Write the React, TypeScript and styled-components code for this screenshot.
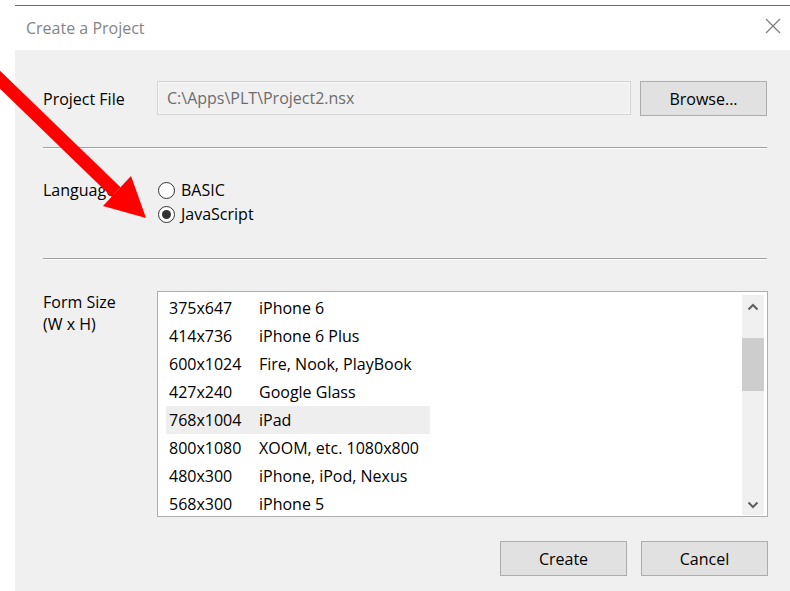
import React from 'react'
import styled, { createGlobalStyle } from 'styled-components'

const GlobalStyle = createGlobalStyle`
	html, body {
		margin: 0;
		padding: 0;
		background: #ffffff;
	}
	body {
		font-family: 'Segoe UI', 'Open Sans', 'Noto Sans', sans-serif;
		font-size: 15px;
		color: #000000;
	}
`

interface FormSize {
	size: string
	name: string
}

const sizes: FormSize[] = [
	{ size: '375x647', name: 'iPhone 6' },
	{ size: '414x736', name: 'iPhone 6 Plus' },
	{ size: '600x1024', name: 'Fire, Nook, PlayBook' },
	{ size: '427x240', name: 'Google Glass' },
	{ size: '768x1004', name: 'iPad' },
	{ size: '800x1080', name: 'XOOM, etc. 1080x800' },
	{ size: '480x300', name: 'iPhone, iPod, Nexus' },
	{ size: '568x300', name: 'iPhone 5' },
]

const selectedIndex = 4

export default function App() {
	return (
		<Page>
			<GlobalStyle />
			<Dialog>
				<TitleBar>
					<Title>Create a Project</Title>
					<CloseIcon viewBox="0 0 16 16" width="16" height="16">
						<path d="M1 1 L15 15 M15 1 L1 15" stroke="#7a7a7a" strokeWidth="1.2" />
					</CloseIcon>
				</TitleBar>
				<Body>
					<FieldRow>
						<Label>Project File</Label>
						<PathInput>C:\Apps\PLT\Project2.nsx</PathInput>
						<Button>Browse...</Button>
					</FieldRow>
					<Separator />
					<LanguageRow>
						<Label>Language</Label>
						<RadioGroup>
							<RadioOption>
								<RadioCircle $checked={false} />
								BASIC
							</RadioOption>
							<RadioOption>
								<RadioCircle $checked />
								JavaScript
							</RadioOption>
						</RadioGroup>
					</LanguageRow>
					<Separator />
					<SizeRow>
						<Label>
							Form Size
							<br />
							(W x H)
						</Label>
						<ListBox>
							<Rows>
								{sizes.map((s, i) => (
									<ListRow key={s.size} $selected={i === selectedIndex}>
										<SizeCell>{s.size}</SizeCell>
										<span>{s.name}</span>
									</ListRow>
								))}
							</Rows>
							<ScrollBar>
								<ScrollArrow viewBox="0 0 12 8" width="12" height="8">
									<path d="M1.5 6.5 L6 2 L10.5 6.5" stroke="#606060" strokeWidth="2" fill="none" />
								</ScrollArrow>
								<Track>
									<Thumb />
								</Track>
								<ScrollArrow viewBox="0 0 12 8" width="12" height="8">
									<path d="M1.5 1.5 L6 6 L10.5 1.5" stroke="#606060" strokeWidth="2" fill="none" />
								</ScrollArrow>
							</ScrollBar>
						</ListBox>
					</SizeRow>
					<Footer>
						<Button>Create</Button>
						<Button>Cancel</Button>
					</Footer>
				</Body>
			</Dialog>
			<Arrow viewBox="0 0 160 230" width="160" height="230">
				<line x1="-8" y1="72" x2="116" y2="192" stroke="#ff0000" strokeWidth="13" />
				<polygon points="103,206 131,176 146,218" fill="#ff0000" />
			</Arrow>
		</Page>
	)
}

const Page = styled.div`
	position: relative;
	width: 790px;
	height: 591px;
	overflow: hidden;
	background: #ffffff;
`

const Dialog = styled.div`
	margin: 5px 0 0 15px;
	width: 775px;
	height: 586px;
	border-top: 1px solid #6a6a6a;
	display: flex;
	flex-direction: column;
`

const TitleBar = styled.div`
	height: 44px;
	flex: none;
	display: flex;
	align-items: center;
	justify-content: space-between;
	padding: 0 10px 0 11px;
	background: #ffffff;
`

const Title = styled.span`
	font-size: 16px;
	color: #858585;
	margin-top: -1px;
`

const CloseIcon = styled.svg`
	display: block;
	margin-top: -4px;
	margin-right: -1px;
`

const Body = styled.div`
	flex: 1;
	background: #f0f0f0;
	padding: 31px 22px 0 28px;
	display: flex;
	flex-direction: column;
`

const Label = styled.div`
	width: 114px;
	flex: none;
	font-size: 16px;
	line-height: 22px;
	color: #000000;
`

const FieldRow = styled.div`
	display: flex;
	align-items: center;
	gap: 9px;
	height: 35px;
	& > ${Label} {
		margin-right: -9px;
	}
`

const PathInput = styled.div`
	width: 474px;
	height: 34px;
	box-sizing: border-box;
	border: 1px solid #d4d4d4;
	box-shadow: inset 0 0 0 1px #f7f7f7;
	padding: 0 9px;
	display: flex;
	align-items: center;
	font-size: 16px;
	color: #6d6d6d;
	background: #f0f0f0;
	margin-top: -1px;
`

const Button = styled.div`
	width: 127px;
	height: 35px;
	box-sizing: border-box;
	border: 1px solid #adadad;
	background: #e1e1e1;
	display: flex;
	align-items: center;
	justify-content: center;
	font-size: 16px;
	color: #000000;
`

const Separator = styled.div`
	height: 1px;
	border-top: 1px solid #a0a0a0;
	background: #ffffff;
	margin: 31px 0 0;
	width: 724px;
`

const LanguageRow = styled.div`
	display: flex;
	align-items: flex-start;
	margin-top: 30px;
	height: 48px;
`

const RadioGroup = styled.div`
	display: flex;
	flex-direction: column;
	margin-top: -1px;
`

const RadioOption = styled.label`
	display: flex;
	align-items: center;
	gap: 6px;
	height: 24px;
	font-size: 16px;
	color: #000000;
`

const RadioCircle = styled.span<{ $checked: boolean }>`
	width: 17px;
	height: 17px;
	box-sizing: border-box;
	border-radius: 50%;
	border: 1px solid #333333;
	background: #ffffff;
	position: relative;
	margin-left: 1px;
	&::after {
		content: '';
		display: ${(p) => (p.$checked ? 'block' : 'none')};
		position: absolute;
		left: 3px;
		top: 3px;
		width: 9px;
		height: 9px;
		border-radius: 50%;
		background: #333333;
	}
`

const SizeRow = styled.div`
	display: flex;
	align-items: flex-start;
	margin-top: 31px;
	line-height: 22px;
`

const ListBox = styled.div`
	width: 612px;
	height: 226px;
	box-sizing: border-box;
	border: 1px solid #aeaeae;
	background: #ffffff;
	display: flex;
	justify-content: space-between;
	padding: 2px 3px 2px 8px;
	overflow: hidden;
`

const Rows = styled.div`
	display: flex;
	flex-direction: column;
	flex: none;
`

const ListRow = styled.div<{ $selected: boolean }>`
	width: 264px;
	height: 28px;
	flex: none;
	display: flex;
	align-items: center;
	padding-left: 3px;
	box-sizing: border-box;
	font-size: 16px;
	color: #000000;
	background: ${(p) => (p.$selected ? '#eeeeee' : 'transparent')};
`

const SizeCell = styled.span`
	width: 90px;
	flex: none;
`

const ScrollBar = styled.div`
	width: 22px;
	height: 220px;
	flex: none;
	background: #f0f0f0;
	display: flex;
	flex-direction: column;
	align-items: center;
	margin-top: 1px;
	padding: 8px 0 6px;
	box-sizing: border-box;
`

const ScrollArrow = styled.svg`
	display: block;
	flex: none;
`

const Track = styled.div`
	flex: 1;
	width: 100%;
	padding-top: 27px;
`

const Thumb = styled.div`
	height: 53px;
	background: #cdcdcd;
`

const Footer = styled.div`
	display: flex;
	justify-content: flex-end;
	gap: 14px;
	margin-top: 24px;
	width: 725px;
`

const Arrow = styled.svg`
	position: absolute;
	left: 0;
	top: 0;
	pointer-events: none;
`
